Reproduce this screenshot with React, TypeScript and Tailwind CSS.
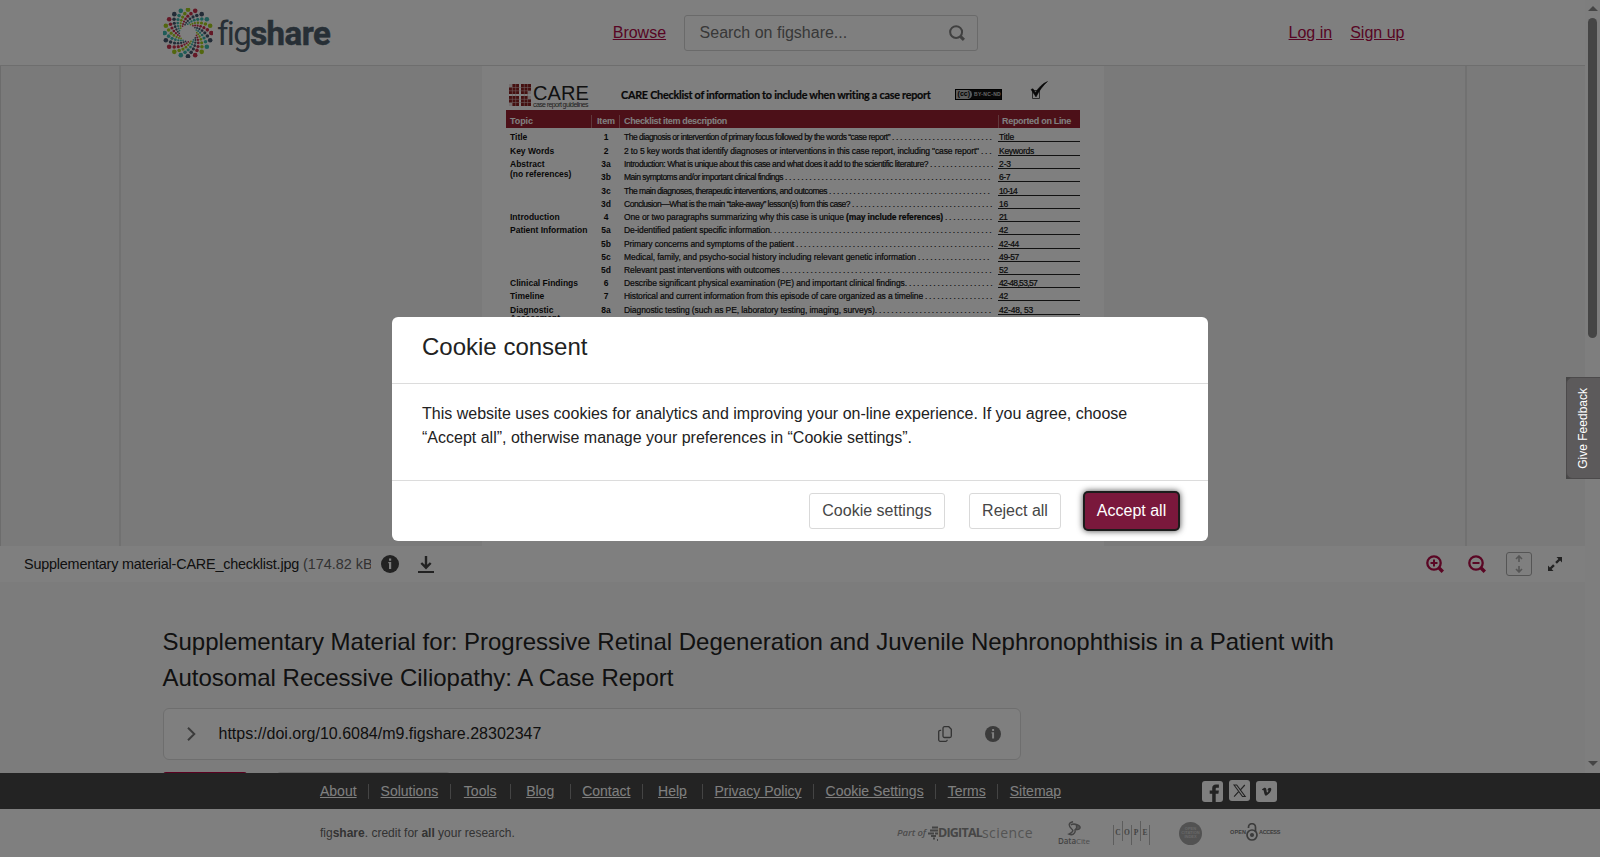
import { useLayoutEffect, useRef } from 'react';
import type { ReactNode } from 'react';
import clsx from 'clsx';

const DOT_COLORS = ['#a6ce1e', '#c8304c', '#46586e', '#3fb8af'];
const DOT_RADII = [23.3, 19.6, 16.8, 14.3, 12.1, 10.3, 8.8];
const DOT_SIZES = [2.3, 1.8, 1.6, 1.35, 1.15, 1, 0.85];

const FOOTER_LINKS = ['About', 'Solutions', 'Tools', 'Blog', 'Contact', 'Help', 'Privacy Policy', 'Cookie Settings', 'Terms', 'Sitemap'];

type Row = {
    topic?: string;
    item: string;
    text: ReactNode;
    width: number;
    line: string;
    lineWidth: number;
    height: string;
};

const ROWS: Row[] = [
    { topic: 'Title', item: '1', text: 'The diagnosis or intervention of primary focus followed by the words “case report”', width: 266, line: 'Title', lineWidth: 15, height: 'h-[14px]' },
    { topic: 'Key Words', item: '2', text: '2 to 5 key words that identify diagnoses or interventions in this case report, including "case report"', width: 355, line: 'Keywords', lineWidth: 35, height: 'h-[14px]' },
    { topic: 'Abstract', item: '3a', text: 'Introduction: What is unique about this case and what does it add to the scientific literature?', width: 304, line: '2-3', lineWidth: 12, height: 'h-[13px]' },
    { item: '3b', text: 'Main symptoms and/or important clinical findings', width: 159, line: '6-7', lineWidth: 11, height: 'h-[13px]' },
    { item: '3c', text: 'The main diagnoses, therapeutic interventions, and outcomes', width: 203, line: '10-14', lineWidth: 18, height: 'h-[14px]' },
    { item: '3d', text: 'Conclusion—What is the main “take-away” lesson(s) from this case?', width: 226, line: '16', lineWidth: 9, height: 'h-[13px]' },
    { topic: 'Introduction', item: '4', text: <>One or two paragraphs summarizing why this case is unique <b>(may include references)</b></>, width: 319, line: '21', lineWidth: 8, height: 'h-[13px]' },
    { topic: 'Patient Information', item: '5a', text: 'De-identified patient specific information.', width: 148, line: '42', lineWidth: 9, height: 'h-[13px]' },
    { item: '5b', text: 'Primary concerns and symptoms of the patient', width: 170, line: '42-44', lineWidth: 20, height: 'h-[14px]' },
    { item: '5c', text: 'Medical, family, and psycho-social history including relevant genetic information', width: 292, line: '49-57', lineWidth: 20, height: 'h-[13px]' },
    { item: '5d', text: 'Relevant past interventions with outcomes', width: 156, line: '52', lineWidth: 9, height: 'h-[13px]' },
    { topic: 'Clinical Findings', item: '6', text: 'Describe significant physical examination (PE) and important clinical findings.', width: 283, line: '42-48,53,57', lineWidth: 38, height: 'h-[13px]' },
    { topic: 'Timeline', item: '7', text: 'Historical and current information from this episode of care organized as a timeline', width: 299, line: '42', lineWidth: 9, height: 'h-[13px]' },
    { topic: 'Diagnostic', item: '8a', text: 'Diagnostic testing (such as PE, laboratory testing, imaging, surveys).', width: 253, line: '42-48, 53', lineWidth: 34, height: 'h-[14px]' },
];

// Spreads the letter spacing so that the text takes exactly the given width
const FitText = ({ width, className, children }: { width: number; className?: string; children: ReactNode }) => {
    const ref = useRef<HTMLSpanElement>(null);
    useLayoutEffect(() => {
        const el = ref.current;
        if (!el) return;
        el.style.letterSpacing = '0px';
        const chars = el.textContent?.length || 1;
        el.style.letterSpacing = `${(width - el.getBoundingClientRect().width) / chars}px`;
    }, [width]);
    return (
        <span ref={ref} className={clsx('inline-block w-fit shrink-0 whitespace-nowrap', className)}>
            {children}
        </span>
    );
};

const Logo = () => (
    <div className="flex items-center">
        <svg className="mt-px size-[50px]" viewBox="-25 -25 50 50">
            {Array.from({ length: 20 }).map((_, arm) =>
                DOT_RADII.map((r, i) => {
                    const a = ((arm * 18 - i * 9.3 - 90) * Math.PI) / 180;
                    return <circle key={`${arm}-${i}`} cx={r * Math.cos(a)} cy={r * Math.sin(a)} r={DOT_SIZES[i]} fill={DOT_COLORS[arm % 4]} />;
                })
            )}
        </svg>
        <div className="mt-[3px] ml-1 flex font-[Roboto,sans-serif] text-[33px] leading-[50px] text-[#4f5f6c]">
            <FitText width={32} className="font-normal">fig</FitText>
            <FitText width={80} className="font-bold [-webkit-text-stroke:0.500px_#4f5f6c]">share</FitText>
        </div>
    </div>
);

const SearchIcon = ({ sign, className }: { sign?: 'plus' | 'minus'; className?: string }) => (
    <svg className={className} viewBox="0 0 18 18" fill="none" stroke="currentColor">
        <circle cx="8" cy="8" r="6.700" strokeWidth="2.300" />
        <path d="M12.800 12.800l4 4" strokeWidth="3.400" />
        {sign && <path d="M4.500 8h7" strokeWidth="2" />}
        {sign === 'plus' && <path d="M8 4.500v7" strokeWidth="2" />}
    </svg>
);

const InfoIcon = ({ className }: { className?: string }) => (
    <svg className={className} viewBox="0 0 18 18">
        <circle cx="9" cy="9" r="9" fill="currentColor" />
        <path d="M8 3.500h2.200v2.200H8zM7.300 7h2.900v7H8V8.300h-.7z" fill="#fff" />
    </svg>
);

const Header = () => (
    <header className="flex h-[66px] shrink-0 items-center border-b border-[#dcdcdc] bg-white pl-[163px] text-base">
        <Logo />
        <a className="ml-[282.500px] text-[#b00a48] underline">Browse</a>
        <div className="ml-[17.500px] flex h-9 w-[294px] items-center justify-between rounded-[3px] border border-[#d4d4d4] pr-3 pl-[15px]">
            <span className="text-[#707070]">Search on figshare...</span>
            <SearchIcon className="size-4 text-[#808080]" />
        </div>
        <a className="ml-[311px] text-[#b00a48] underline">Log in</a>
        <a className="ml-[18px] text-[#b00a48] underline">Sign up</a>
    </header>
);

const CareMark = () => (
    <svg className="size-[22px]" viewBox="0 0 22 22">
        <path d="M0 0h10v10H0zM12 0h10v10H12zM0 12h10v10H0zM12 12h10v10H12z" fill="#8a2020" />
        <path d="M0 3.500h22M0 6.800h22M0 15.300h22M0 18.500h22M3.400 0v22M6.700 0v22M15.300 0v22M18.600 0v22" stroke="#d9b8b8" strokeWidth=".6" />
        <path d="M0 0h3v3H0zM19 7h3v3h-3zM0 19h3v3H0zM19 12h3v3h-3z" fill="#e8dcdc" />
    </svg>
);

const Checklist = () => (
    <div className="h-[480px] w-[622px] overflow-hidden bg-white pl-6 text-[8.500px] text-[#111]">
        <div className="flex h-11 items-start pl-[3px]">
            <div className="flex pt-[18px]">
                <CareMark />
                <div className="ml-[2px] flex w-[86px] flex-col">
                    <FitText width={56} className="h-[17px] text-[20px] leading-[19px] text-[#222]">CARE</FitText>
                    <FitText width={55} className="text-[7px] leading-[8px] text-[#444]">case report guidelines</FitText>
                </div>
            </div>
            <FitText width={310} className="mt-[21px] ml-[2px] font-[Lato,sans-serif] text-[10.800px] leading-4 font-bold [-webkit-text-stroke:0.200px_#111]">
                CARE Checklist of information to include when writing a case report
            </FitText>
            <div className="mt-[23px] ml-[24px] flex h-[11px] w-[47px] items-center border border-black bg-[#111] text-[5px] font-bold text-[#ccc]">
                <span className="mr-[2px] flex h-full items-center rounded-r-full bg-[#bbb] px-[2px] text-[7px] text-black">(cc)</span>
                <FitText width={27}>BY-NC-ND</FitText>
            </div>
            <svg className="mt-[15px] ml-[28px] h-[19px] w-[19px]" viewBox="0 0 19 19">
                <path d="M2.500 9.500h7v8h-7z" fill="none" stroke="#444" strokeWidth=".9" />
                <path d="M1 8.500l2-.8 2.500 3.800C8.500 6.500 12.500 2.500 17.500.5 13 4.500 9.500 9 6 16z" fill="#111" stroke="#111" strokeWidth=".5" />
            </svg>
        </div>
        <div className="flex h-[18px] w-[574px] items-center bg-[#992030] pt-[5px] text-[9px] leading-[13px] font-bold text-white">
            <span className="w-[85px] pl-1">
                <FitText width={23}>Topic</FitText>
            </span>
            <span className="w-7 border-l border-[#c07078] pl-[5px]">
                <FitText width={18}>Item</FitText>
            </span>
            <span className="w-[379px] border-l border-[#c07078] pl-1">
                <FitText width={103}>Checklist item description</FitText>
            </span>
            <span className="border-l border-[#c07078] pl-[3px]">
                <FitText width={69}>Reported on Line</FitText>
            </span>
        </div>
        <div className="w-[574px] leading-[9px]">
            {ROWS.map((row) => (
                <div key={row.item} className={clsx('flex items-end', row.height)}>
                    <div className="h-[9px] w-[88px] pl-1 font-bold whitespace-nowrap">
                        {row.topic}
                        {row.item === '3a' && <div className="pt-px">(no references)</div>}
                        {row.item === '8a' && <div className="-mt-px">Assessment</div>}
                    </div>
                    <b className="w-[24px] text-center">{row.item}</b>
                    <div className="ml-[6px] flex w-[374px]">
                        <FitText width={row.width} className="[-webkit-text-stroke:0.200px_#111]">{row.text}</FitText>
                        <span className="ml-[2px] tracking-[1.700px] whitespace-nowrap [-webkit-text-stroke:0.200px_#111]">{'.'.repeat(Math.floor((369 - row.width) / 4.06))}</span>
                    </div>
                    <div className="w-[82px] border-b border-[#222] pl-px leading-[8px]">
                        <FitText width={row.lineWidth} className="[-webkit-text-stroke:0.200px_#111]">{row.line}</FitText>
                    </div>
                </div>
            ))}
        </div>
    </div>
);

const Preview = () => (
    <section className="flex h-[480px] shrink-0 justify-between border-l border-[#d8d8d8] bg-[#f4f4f4]">
        <div className="w-[120px] border-r-2 border-[#e2e2e2]" />
        <Checklist />
        <div className="w-[120px] border-l-2 border-[#e2e2e2]" />
    </section>
);

const FileBar = () => (
    <div className="flex h-9 shrink-0 items-center bg-white pl-6 text-[#333]">
        <div className="mt-px w-[347px] overflow-hidden text-[14.400px] whitespace-nowrap">
            <FitText width={275} className="text-[#222]">Supplementary material-CARE_checklist.jpg</FitText>
            <span className="ml-1 text-[#666]">(174.82 kB)</span>
        </div>
        <InfoIcon className="ml-[10px] size-[18px] text-[#444]" />
        <svg className="ml-[19px] h-[18px] w-4 text-[#444]" viewBox="0 0 16 18" fill="none" stroke="currentColor">
            <path d="M8 1v12M3.300 8L8 12.700 12.700 8" strokeWidth="2.400" />
            <path d="M0 17h16" strokeWidth="2" />
        </svg>
        <div className="mr-[23px] ml-auto flex items-center">
            <SearchIcon sign="plus" className="size-[18px] text-[#b50d48]" />
            <SearchIcon sign="minus" className="ml-6 size-[18px] text-[#b50d48]" />
            <div className="ml-5 flex h-6 w-[26px] items-center justify-center rounded-[3px] border border-[#aaa] text-[#aaa]">
                <svg className="h-[18px] w-2" viewBox="0 0 8 18" fill="none" stroke="currentColor" strokeWidth="1.600">
                    <path d="M4 1v6M1 4l3-3 3 3M4 11v6M1 14l3 3 3-3" />
                </svg>
            </div>
            <svg className="ml-4 size-[14px] text-[#444]" viewBox="0 0 14 14" fill="currentColor">
                <path d="M8.500 0H14v5.500l-1.900-1.900-3.200 3.200-1.700-1.700 3.200-3.200zM5.500 14H0V8.500l1.900 1.900 3.200-3.200 1.700 1.700-3.200 3.200z" />
            </svg>
        </div>
    </div>
);

const Article = () => (
    <main className="flex-1 overflow-hidden bg-[#f9f9f9] pt-[42px] pl-[162.500px]">
        <h1 className="w-[1200px] text-2xl leading-9 text-[#222]">
            Supplementary Material for: Progressive Retinal Degeneration and Juvenile Nephronophthisis in a Patient with Autosomal Recessive Ciliopathy: A Case Report
        </h1>
        <div className="mt-3 flex h-[52px] w-[858px] items-center rounded-md border border-[#dcdcdc] bg-white pr-[19px] pl-[23px]">
            <svg className="h-[14px] w-[9px] text-[#777]" viewBox="0 0 9 14" fill="none" stroke="currentColor" strokeWidth="2">
                <path d="M1 .7L7.300 7 1 13.300" />
            </svg>
            <span className="ml-[23px] text-base text-[#222]">https://doi.org/10.6084/m9.figshare.28302347</span>
            <svg className="ml-auto h-4 w-[14px] text-[#666]" viewBox="0 0 14 16" fill="none" stroke="currentColor" strokeWidth="1.300">
                <path d="M6.500.7h4.300l2.500 2.500v6.800a1.500 1.500 0 0 1-1.500 1.500H6.500A1.500 1.500 0 0 1 5 10V2.200A1.500 1.500 0 0 1 6.500.7z" />
                <path d="M3.200 4.300h-1A1.500 1.500 0 0 0 .7 5.800v8a1.500 1.500 0 0 0 1.500 1.500h5.500a1.500 1.500 0 0 0 1.500-1.500" />
            </svg>
            <InfoIcon className="ml-[33px] size-4 text-[#777]" />
        </div>
        <div className="mt-3 flex">
            <div className="h-9 w-[84px] rounded-[3px] bg-[#b50040]" />
            <div className="ml-[30px] h-9 w-[173px] rounded-[3px] border border-[#d4d4d4]" />
        </div>
    </main>
);

const Scrollbar = () => (
    <div className="flex w-[15px] shrink-0 flex-col items-center bg-[#fcfcfc] pt-[6px] pb-[7px]">
        <div className="border-x-[5px] border-b-[5px] border-x-transparent border-b-[#8b8b8b]" />
        <div className="mt-[7px] h-[320px] w-[9px] rounded-full bg-[#8b8b8b]" />
        <div className="mt-auto border-x-[5px] border-t-[5px] border-x-transparent border-t-[#8b8b8b]" />
    </div>
);

const Social = ({ children, className }: { children: ReactNode; className?: string }) => (
    <svg className={clsx('size-[21px]', className)} viewBox="0 0 21 21">
        <rect width="21" height="21" rx="3" fill="#fff" />
        {children}
    </svg>
);

const PartnerLogos = () => (
    <div className="ml-auto flex items-center text-[#999]">
        <FitText width={29} className="font-['Open_Sans',sans-serif] text-[9.500px] font-semibold italic">Part of</FitText>
        <svg className="ml-[2px] h-[15px] w-[10px]" viewBox="0 0 10 15" fill="none" stroke="#888">
            <path d="M4 1.500h6M2 4.500h8M0 7.500h6M7 7.500h3M3 10h5M5 12.500h2M9 14h1" strokeWidth="1.800" />
        </svg>
        <div className="flex items-center font-['Open_Sans',sans-serif] leading-4">
            <FitText width={44} className="text-[12.500px] font-bold text-[#8c8c8c]">DIGITAL</FitText>
            <FitText width={51} className="text-[14px] text-[#a8a8a8]">science</FitText>
        </div>
        <div className="ml-[25px] flex flex-col items-center">
            <svg className="h-[15px] w-[15px]" viewBox="0 0 15 16" fill="none" stroke="#888" strokeWidth="1.500">
                <path d="M6 .8C.5 1.500 1 5.500 4.500 8.500c2.500 2 .5 4-3 5.500 4 1.800 6.500-.5 7-4" />
                <path d="M3.500 4C8 2 13.500 4.500 13.500 7c0 1.800-3 2.500-5.500 2.500 2-2 2.500-3.500 1-5" fill="#aaa" />
            </svg>
            <FitText width={32} className="font-['Open_Sans',sans-serif] text-[8px] leading-[9px] text-[#999]"><span className="font-semibold text-[#888]">Data</span>Cite</FitText>
        </div>
        <div className="ml-[23px] flex h-6 items-center font-['Liberation_Serif',serif] text-[7.500px] font-bold text-[#888]">
            <span className="h-5 w-px self-end bg-[#bbb]" />
            {['C', 'O', 'P', 'E'].map((letter, i) => (
                <span key={letter} className={clsx('flex h-5 w-[9px] border-r border-[#bbb]', i % 2 ? 'items-start self-end pt-[3px]' : 'items-end self-start pb-[3px]')}>
                    <span className="w-full text-center leading-[10px]">{letter}</span>
                </span>
            ))}
        </div>
        <div className="ml-[29px] flex size-[23px] flex-col items-center justify-center rounded-full bg-[#a4a4a4] text-[4px] leading-[4px] font-bold text-[#d0d0d0]">
            <span>OPEN</span>
            <span>CITATION</span>
            <span>INDEX</span>
        </div>
        <div className="ml-7 flex items-center text-[5.500px] font-bold text-[#777]">
            <FitText width={16}>OPEN</FitText>
            <svg className="-mt-[2px] h-[18px] w-3" viewBox="0 0 12 18" fill="none" stroke="#777" strokeWidth="1.700">
                <circle cx="6" cy="12" r="5" />
                <path d="M2.500 5V4.200a3.500 3.500 0 0 1 7 0V9" />
                <circle cx="6" cy="12" r="1.200" fill="#777" />
            </svg>
            <FitText width={21} className="ml-px">ACCESS</FitText>
        </div>
    </div>
);

const Footer = () => (
    <footer className="shrink-0">
        <div className="flex h-9 items-center bg-[#464646] pr-[323px] pl-[320px] text-sm text-white">
            <ul className="flex">
                {FOOTER_LINKS.map((link, i) => (
                    <li
                        key={link}
                        className={clsx(
                            'flex h-[15px] items-center justify-center px-[11.500px]',
                            i === 0 ? 'pl-0' : 'min-w-[60px]',
                            i < FOOTER_LINKS.length - 1 && 'border-r border-[#888]'
                        )}
                    >
                        <a className="underline">{link}</a>
                    </li>
                ))}
            </ul>
            <div className="ml-auto flex items-center gap-[6px]">
                <Social>
                    <path d="M10.200 21v-8.300H7.700V9.500h2.500V7.300c0-2.500 1.500-3.700 3.700-3.700h3v3.100h-1.700c-1.200 0-1.500.5-1.500 1.400v1.400h3.200l-.5 3.200h-2.700V21z" fill="#464646" />
                </Social>
                <Social className="-mt-[2px]">
                    <path d="M5 5l8.500 11.500h2.700L7.700 5z" fill="none" stroke="#464646" strokeWidth="1.100" />
                    <path d="M15.800 5l-4.600 5.100M9.600 11.700L5.100 16.600" stroke="#464646" strokeWidth="1.200" />
                </Social>
                <Social>
                    <path d="M6 8.300c1.200-1 2.200-1.700 3-1.600 1.700.1 1.500 3.500 2 4.700.5.700 1.500-1 1.400-1.700-.1-.6-.6-.6-1.100-.4.500-1.700 1.600-2.500 2.700-2.500 2.800.2.700 5-3.400 7.800-2 .9-2.300-2.500-3-5-.2-.7-.5-.7-1.200-.3z" fill="#464646" />
                </Social>
            </div>
        </div>
        <div className="flex h-12 items-center bg-white pr-[320px] pl-[320px] text-xs text-[#666]">
            <p>
                fig<b>share</b>. credit for <b>all</b> your research.
            </p>
            <PartnerLogos />
        </div>
    </footer>
);

const CookieDialog = () => (
    <div role="dialog" className="w-[816px] rounded-md bg-white text-base text-[#222]">
        <h2 className="h-[67px] border-b border-[#dcdcdc] px-[30px] pt-3 text-2xl leading-9">Cookie consent</h2>
        <p className="h-24 px-[30px] pt-[18px]">
            This website uses cookies for analytics and improving your on-line experience. If you agree, choose “Accept all”, otherwise manage your preferences in “Cookie settings”.
        </p>
        <div className="flex h-[61px] items-center justify-end gap-6 border-t border-[#dcdcdc] px-[30px]">
            <button className="h-9 w-[136px] rounded-[3px] border border-[#d9d9d9] text-[#464646]">Cookie settings</button>
            <button className="h-9 w-[92px] rounded-[3px] border border-[#d9d9d9] text-[#464646]">Reject all</button>
            <button className="h-9 w-[93px] rounded-[3px] bg-[#7a183c] text-white shadow-[0_0_0_2px_#1c1c1c,0_0_6px_2px_#444]">Accept all</button>
        </div>
    </div>
);

const App = () => {
    return (
        <div className="relative h-[857px] w-[1600px] overflow-hidden bg-white font-['Liberation_Sans',Arial,sans-serif]">
            <div className="flex h-full flex-col">
                <div className="flex h-[773px]">
                    <div className="flex w-[1585px] flex-col">
                        <Header />
                        <Preview />
                        <FileBar />
                        <Article />
                    </div>
                    <Scrollbar />
                </div>
                <Footer />
            </div>
            <div className="absolute inset-0 flex items-center justify-center bg-black/50">
                <CookieDialog />
            </div>
            <div className="absolute top-[377px] right-0 h-[102px] w-[34px] bg-[#464646]">
                <button className="flex h-full w-full items-center justify-center rounded-l-md border border-r-0 border-[#4c4a4b] bg-[#5c5a5b] pr-[2px] text-xs text-white">
                    <span className="rotate-180 [writing-mode:vertical-rl]">Give Feedback</span>
                </button>
            </div>
        </div>
    );
};

export default App;
